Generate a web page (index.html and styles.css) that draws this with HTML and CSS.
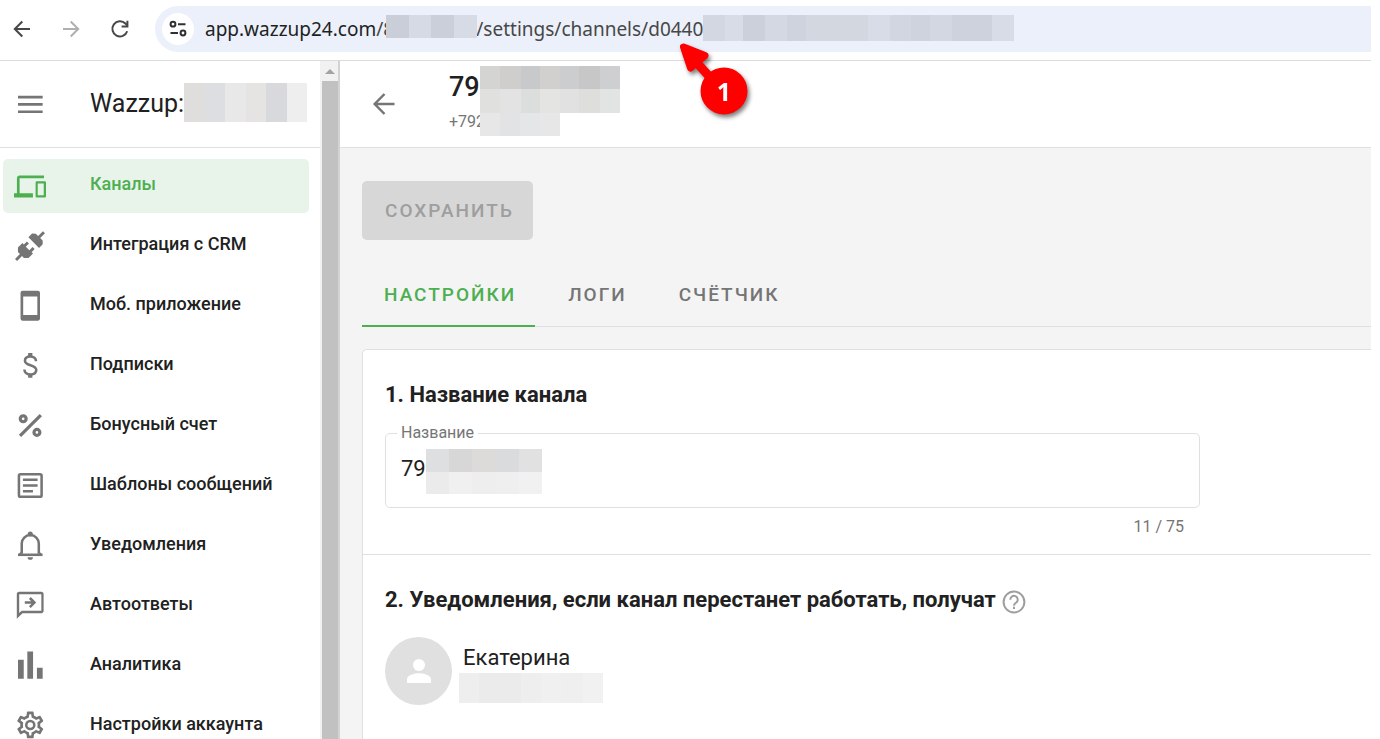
FILE: index.html
```html
<!DOCTYPE html>
<html lang="ru">
<head>
  <meta charset="UTF-8">
  <meta name="viewport" content="width=device-width, initial-scale=1.0">
  <title>Wazzup: Каналы</title>
  <link rel="stylesheet" href="styles.css">
</head>
<body>
  <div class="window">
    <div class="toolbar">
      <button class="tool" type="button" aria-label="Назад">
        <svg width="24" height="24" viewBox="0 0 24 24" fill="none" stroke="#474747" stroke-width="2"><path d="M20 12H5M12.3 4.5 4.8 12l7.5 7.5"/></svg>
      </button>
      <button class="tool" type="button" aria-label="Вперёд">
        <svg width="24" height="24" viewBox="0 0 24 24" fill="none" stroke="#b0b0b0" stroke-width="2"><path d="M4 12h15M11.7 4.5l7.5 7.5-7.5 7.5"/></svg>
      </button>
      <button class="tool" type="button" aria-label="Обновить">
        <svg width="24" height="24" viewBox="0 0 24 24" fill="none" stroke="#474747" stroke-width="2"><path d="M19.2 14.2A7.6 7.6 0 1 1 17.4 6.5L19.2 8.4"/><path d="M19.4 3.8v5.8h-5.8"/></svg>
      </button>
      <div class="address">
        <button class="site-info" type="button" aria-label="Сведения о сайте">
          <svg width="20" height="20" viewBox="0 0 20 20" fill="none" stroke="#303030" stroke-width="2"><circle cx="5" cy="5.2" r="2.4"/><path d="M10 5.2h7.5M2.5 14h7.5"/><circle cx="15" cy="14" r="2.4"/></svg>
        </button>
        <div class="url"><span class="host">app.wazzup24.com</span>/<span class="hidden-id">8<i class="mosaic mosaic-id"></i></span>/settings/channels/d0440<i class="mosaic mosaic-guid"></i></div>
      </div>
    </div>

    <div class="app">
      <aside class="sidebar">
        <div class="panel">
          <div class="brand">
            <button class="menu" type="button" aria-label="Меню">
              <svg width="32" height="32" viewBox="0 0 24 24" fill="#757575"><path d="M3 5.8h18.500v2H3zM3 11.300h18.500v2H3zM3 16.800h18.500v2H3z"/></svg>
            </button>
            <span class="brand-name">Wazzup:</span>
            <i class="mosaic mosaic-brand"></i>
          </div>
          <nav class="nav">
            <a class="nav-item active" href="#">
              <svg viewBox="0 0 24 24"><path d="M4.200 6.200h18.300v-2H4.200c-1.100 0-2 .9-2 2v11.300H0v3.200h14.200v-3.200h-10zM23 8.500h-5.800c-.6 0-1 .4-1 1v10.200c0 .6.4 1 1 1H23c.6 0 1-.4 1-1V9.500c0-.6-.4-1-1-1zm-.7 10.500h-4.500V10.200h4.500z"/></svg>
              <span>Каналы</span>
            </a>
            <a class="nav-item" href="#">
              <svg viewBox="0 0 24 24"><g transform="rotate(45 12 12)"><path d="M11-2.700h2.200v5.100h2.600l2 1.900V8.200H6.500V4.300l2-1.900H11zM7.900 11.200h2.200v3.400h3.800v-3.400h2.200v3.200h1.500v4.800l-2.400 2.400h-2.100v5.200h-2.200v-5.200H8.800l-2.400-2.400v-4.800h1.500z"/></g></svg>
              <span>Интеграция с CRM</span>
            </a>
            <a class="nav-item" href="#">
              <svg viewBox="0 0 24 24"><path d="M6.500.600h11.400c.9 0 1.600.7 1.600 1.600v19.200c0 .9-.7 1.600-1.600 1.600H6.500c-.9 0-1.600-.7-1.600-1.600V2.200c0-.9.7-1.600 1.600-1.600zm.4 4.200v14h10.600v-14z"/></svg>
              <span>Моб. приложение</span>
            </a>
            <a class="nav-item" href="#">
              <svg viewBox="0 0 24 24"><path d="M10.600 2.200h3.200v2.600h-3.200zM10.600 18.200h3.200v2.600h-3.200z"/><path class="line" d="M16.500 8.400c0-2.200-1.700-3.600-4.200-3.600-2.600 0-4.100 1.300-4.100 3.200 0 4.300 8.500 2.500 8.500 7 0 2-1.700 3.300-4.300 3.300-2.800 0-4.500-1.400-4.600-3.700"/></svg>
              <span>Подписки</span>
            </a>
            <a class="nav-item" href="#">
              <svg viewBox="0 0 24 24"><g class="line thick"><circle cx="6.900" cy="6.600" r="2.200"/><circle cx="17.200" cy="16.800" r="2.200"/><path d="M4.500 19.400 20.100 3.900"/></g></svg>
              <span>Бонусный счет</span>
            </a>
            <a class="nav-item" href="#">
              <svg viewBox="0 0 24 24"><g class="line"><rect x="3.700" y="3.200" width="17" height="16.900" rx="1.200"/><path d="M6.700 7.300h11M6.700 11.700h11M6.700 15.900h7.500"/></g></svg>
              <span>Шаблоны сообщений</span>
            </a>
            <a class="nav-item" href="#">
              <svg viewBox="0 0 24 24"><g class="line"><path d="M5.800 17.800V10.200a6.400 6.400 0 0 1 12.800 0v7.600"/><path d="M3 18.600h18.400"/></g><circle cx="12.200" cy="3" r="1.900"/><path d="M5.200 16.300 3 18.600h18.400l-2.200-2.300V18h-14zM10.200 20.400h4a2 2 0 0 1-4 0z"/></svg>
              <span>Уведомления</span>
            </a>
            <a class="nav-item" href="#">
              <svg viewBox="0 0 24 24"><path d="M20.500 1.300H3.800c-.9 0-1.700.7-1.700 1.700v18.600l4.300-4.200h14.100c1 0 1.700-.8 1.700-1.700V3c0-1-.7-1.700-1.700-1.700zm0 14.300H5.700l-1.800 1.700V3.100h16.600z"/><path class="line" d="M8.100 9.400h7M11.900 6l3.400 3.400-3.400 3.400"/></svg>
              <span>Автоответы</span>
            </a>
            <a class="nav-item" href="#">
              <svg viewBox="0 0 24 24"><path d="M3 7.300h4.300v14.200H3zM10 1.100h4.300v20.400H10zM17.200 13.300h4.300v8.200h-4.300z"/></svg>
              <span>Аналитика</span>
            </a>
            <a class="nav-item" href="#">
              <svg viewBox="0 0 24 24"><g transform="translate(.2 -.8)"><path d="M19.430 12.980c.04-.32.07-.64.07-.98s-.03-.66-.07-.98l2.110-1.650c.19-.15.24-.42.12-.64l-2-3.460c-.09-.16-.26-.25-.44-.25-.06 0-.12.01-.17.03l-2.490 1c-.52-.4-1.080-.73-1.690-.98l-.38-2.650C14.460 2.180 14.250 2 14 2h-4c-.25 0-.46.18-.49.42l-.38 2.650c-.61.25-1.170.59-1.690.98l-2.490-1c-.06-.02-.12-.03-.18-.03-.17 0-.34.09-.43.25l-2 3.460c-.13.22-.07.49.12.64l2.110 1.650c-.04.32-.07.65-.07.98s.03.66.07.98l-2.110 1.650c-.19.15-.24.42-.12.64l2 3.460c.09.16.26.25.44.25.06 0 .12-.01.17-.03l2.490-1c.52.4 1.080.73 1.690.98l.38 2.650c.03.24.24.42.49.42h4c.25 0 .46-.18.49-.42l.38-2.650c.61-.25 1.170-.59 1.690-.98l2.490 1c.06.02.12.03.18.03.17 0 .34-.09.43-.25l2-3.460c.12-.22.07-.49-.12-.64l-2.110-1.650zm-1.980-1.710c.04.31.05.52.05.73 0 .21-.02.43-.05.73l-.14 1.130.89.7 1.080.84-.7 1.210-1.270-.51-1.040-.42-.9.68c-.43.32-.84.56-1.250.73l-1.060.43-.16 1.130-.2 1.350h-1.400l-.19-1.350-.16-1.130-1.060-.43c-.43-.18-.83-.41-1.230-.71l-.91-.7-1.060.43-1.270.51-.7-1.210 1.080-.84.89-.7-.14-1.130c-.03-.31-.05-.54-.05-.74s.02-.43.05-.73l.14-1.130-.89-.7-1.080-.84.7-1.210 1.270.51 1.040.42.9-.68c.43-.32.84-.56 1.250-.73l1.060-.43.16-1.130.2-1.350h1.390l.19 1.350.16 1.130 1.060.43c.43.18.83.41 1.230.71l.91.7 1.060-.43 1.270-.51.7 1.210-1.070.85-.89.7.14 1.130z"/><circle class="line" cx="12" cy="12" r="3"/></g></svg>
              <span>Настройки аккаунта</span>
            </a>
          </nav>
        </div>
        <div class="scrollbar">
          <div class="scroll-up"></div>
          <div class="scroll-thumb"></div>
        </div>
      </aside>

      <main class="main">
        <header class="channel">
          <button class="back" type="button" aria-label="К списку каналов">
            <svg width="28" height="28" viewBox="0 0 28 28" fill="none" stroke="#757575" stroke-width="2.500"><path d="M24.500 14H5M14.500 4 4.700 14l9.800 10"/></svg>
          </button>
          <div class="channel-text">
            <h1>79</h1>
            <p>+792</p>
            <i class="mosaic mosaic-title"></i>
            <i class="mosaic mosaic-phone"></i>
          </div>
        </header>

        <div class="content">
          <button class="save" type="button" disabled>Сохранить</button>

          <div class="tabs" role="tablist">
            <button class="tab selected" type="button" role="tab" aria-selected="true">Настройки</button>
            <button class="tab" type="button" role="tab">Логи</button>
            <button class="tab" type="button" role="tab">Счётчик</button>
          </div>

          <div class="card">
            <section class="section name-section">
              <h2>1. Название канала</h2>
              <fieldset class="field">
                <legend><label for="channel-name">Название</label></legend>
                <input id="channel-name" type="text" value="79">
                <i class="mosaic mosaic-name"></i>
              </fieldset>
              <div class="counter">11 / 75</div>
            </section>
            <section class="section people-section">
              <div class="heading">
                <h2>2. Уведомления, если канал перестанет работать, получат</h2>
                <button class="help" type="button" aria-label="Справка">
                  <svg width="24" height="24" viewBox="0 0 24 24" fill="none" stroke="#9e9e9e" stroke-width="2"><circle cx="12" cy="12" r="10.400"/><path d="M8.300 9.700a3.700 3.700 0 1 1 6.300 2.500c-1.400 1.200-2.600 1.700-2.600 3.600"/><path d="M12 16.800v2.200"/></svg>
                </button>
              </div>
              <div class="person">
                <div class="avatar">
                  <svg width="36" height="36" viewBox="0 0 24 24" fill="#fff"><circle cx="12" cy="8" r="4"/><path d="M12 13.500c-2.700 0-8 1.300-8 4V20h16v-2.500c0-2.700-5.300-4-8-4z"/></svg>
                </div>
                <div class="person-text">
                  <span class="person-name">Екатерина</span>
                  <i class="mosaic mosaic-contact"></i>
                </div>
              </div>
            </section>
          </div>
        </div>
      </main>
    </div>

    <svg class="pointer" width="90" height="90" viewBox="0 0 90 90">
      <path d="M48 51 27 28" stroke="#f00" stroke-width="9"/>
      <path d="M13.500 12 35 20.500 20.500 33z" fill="#f00" stroke="#f00" stroke-width="7" stroke-linejoin="round"/>
      <circle cx="54" cy="56" r="23.500" fill="#f00"/>
      <text class="pointer-number" x="54" y="66" text-anchor="middle">1</text>
    </svg>
  </div>
</body>
</html>
```
FILE: styles.css
```css
* {
  box-sizing: border-box;
}

body {
  margin: 0;
  font-family: Roboto, "Liberation Sans", sans-serif;
  background: #fff;
  color: #212121;
}

button {
  padding: 0;
  border: 0;
  background: none;
  font-family: inherit;
  cursor: pointer;
}

svg {
  display: block;
}

h1, h2, p {
  margin: 0;
}

.window {
  position: relative;
  display: flex;
  flex-direction: column;
  height: 100vh;
  padding-right: 9px;
  overflow: hidden;
}

/* browser toolbar */
.toolbar {
  flex: none;
  display: flex;
  align-items: center;
  gap: 25px;
  padding: 6px 0 8px 10px;
  border-bottom: 1px solid #dcdcdc;
}

.address {
  flex: 1;
  display: flex;
  align-items: center;
  gap: 11px;
  height: 46px;
  margin-left: -2px;
  padding-left: 7px;
  border-radius: 23px 0 0 23px;
  background: #ebf0fa;
}

.site-info {
  display: flex;
  align-items: center;
  justify-content: center;
  width: 32px;
  height: 32px;
  border-radius: 50%;
  background: #fff;
}

.url {
  display: flex;
  align-items: center;
  font: 19px/28px "Noto Sans", sans-serif;
  color: #474747;
}

.host {
  color: #1f1f1f;
}

.hidden-id {
  position: relative;
  width: 93px;
}

/* pixelated blocks over private data */
.mosaic {
  display: block;
}

.mosaic-id {
  position: absolute;
  top: 0;
  left: 3px;
  width: 91px;
  height: 23px;
  background: linear-gradient(90deg, #c9ced8 25%, #d5dae4 25% 50%, #cacfd9 50% 75%, #d6dbe5 75%);
}

.mosaic-guid {
  width: 311px;
  height: 26px;
  margin-bottom: 2px;
  background: linear-gradient(90deg, #d3d7e1 7%, #d8dce6 7% 13%, #cbd0da 13% 20%, #d3d8e2 20% 27%, #cfd3de 27% 33%, #d3d7e0 33% 53%, #d8dce6 53% 60%, #d2d6e0 60% 67%, #ced3dd 67% 73%, #d3d7e1 73% 80%, #ced2dc 80% 93%, #d8dce6 93%);
}

.mosaic-brand {
  width: 123px;
  height: 39px;
  background: linear-gradient(90deg, #dfdedd 17%, #dcdee1 17% 33%, #e8e8e8 33% 50%, #e5e4e2 50% 67%, #d7d9dc 67% 84%, #eee 84%);
}

.mosaic-title {
  position: absolute;
  top: 5px;
  left: 31px;
  width: 140px;
  height: 47px;
  background:
    linear-gradient(90deg, #d4d4d3 14%, #cfcecd 14% 29%, #c7c9cb 29% 43%, #d1d0cf 43% 57%, #cccdcf 57% 71%, #c7c7c8 71% 86%, #cecfd1 86%) top / 100% 23px no-repeat,
    linear-gradient(90deg, #e0e0df 14%, #e3e3e3 14% 29%, #dcdedd 29% 43%, #e4e4e2 43% 57%, #e1e1e1 57% 71%, #dededd 71% 86%, #e2e4e4 86%) bottom / 100% 24px no-repeat;
}

.mosaic-phone {
  position: absolute;
  top: 52px;
  left: 31px;
  width: 80px;
  height: 23px;
  background: linear-gradient(90deg, #e7e7e7 25%, #e2e3e4 25% 50%, #e5e6e8 50% 75%, #e7e7e7 75%);
}

.mosaic-name {
  position: absolute;
  top: 7px;
  left: 40px;
  width: 116px;
  height: 45px;
  background:
    linear-gradient(90deg, #dedfe0 20%, #d7d7d8 20% 40%, #dcdbd9 40% 60%, #dadbdc 60% 80%, #e1e1e1 80%) top / 100% 23px no-repeat,
    linear-gradient(90deg, #ebebeb 20%, #f0f0f0 20% 40%, #eee 40% 60%, #efefef 60% 80%, #f1f1f1 80%) bottom / 100% 22px no-repeat;
}

.mosaic-contact {
  width: 144px;
  height: 30px;
  background: linear-gradient(90deg, #eee 14%, #ebebeb 14% 43%, #eee 43% 57%, #f0f0f0 57% 71%, #efefef 71% 86%, #f1f1f1 86%);
}

.app {
  flex: 1;
  display: flex;
  min-height: 0;
}

/* sidebar */
.sidebar {
  flex: none;
  display: flex;
  width: 340px;
}

.panel {
  flex: 1;
  overflow: hidden;
}

.brand {
  display: flex;
  align-items: center;
  height: 87px;
  padding-left: 14px;
  border-bottom: 1px solid #e0e0e0;
}

.brand-name {
  width: 94px;
  margin-left: 44px;
  font-size: 25px;
  line-height: 32px;
}

.brand .mosaic-brand {
  margin-top: -4px;
}

.nav {
  display: flex;
  flex-direction: column;
  gap: 6px;
  padding: 11px 11px 0 3px;
}

.nav-item {
  flex: none;
  display: flex;
  align-items: center;
  gap: 44px;
  height: 54px;
  padding-left: 11px;
  border-radius: 5px;
  color: #212121;
  font-size: 18px;
  font-weight: 500;
  line-height: 24px;
  text-decoration: none;
}

.nav-item span {
  padding-bottom: 4px;
}

.nav-item svg {
  width: 32px;
  height: 32px;
  fill: #757575;
  overflow: visible;
}

.nav-item .line {
  fill: none;
  stroke: #757575;
  stroke-width: 1.9;
}

.nav-item .thick {
  stroke-width: 2.4;
}

.nav-item.active {
  background: #e8f3ea;
  color: #4caf50;
}

.nav-item.active svg {
  fill: #4caf50;
}

.scrollbar {
  display: flex;
  flex-direction: column;
  width: 20px;
  padding-left: 2px;
  border-right: 2px solid #d3d3d3;
  background: #f1f1f1;
}

.scroll-up {
  height: 20px;
  display: flex;
  align-items: center;
  justify-content: center;
}

.scroll-up::before {
  content: "";
  border: 5px solid transparent;
  border-top: 0;
  border-bottom-color: #a3a3a3;
}

.scroll-thumb {
  flex: 1;
  background: #c1c1c1;
}

/* channel page */
.main {
  flex: 1;
  min-width: 0;
  background: #f4f4f4;
}

.channel {
  display: flex;
  align-items: center;
  gap: 51px;
  height: 87px;
  padding-left: 30px;
  border-bottom: 1px solid #e0e0e0;
  background: #fff;
}

.channel-text {
  position: relative;
  align-self: stretch;
  padding-top: 10px;
}

.channel h1 {
  font-size: 27px;
  font-weight: 500;
  line-height: 32px;
}

.channel p {
  margin-top: 9px;
  color: #757575;
  font-size: 16px;
  line-height: 20px;
}

.content {
  padding: 33px 0 0 22px;
}

.save {
  height: 59px;
  padding: 0 19px 0 23px;
  border-radius: 5px;
  background: #d7d7d7;
  color: #9e9e9e;
  font-size: 19px;
  font-weight: 500;
  letter-spacing: 2px;
  text-transform: uppercase;
}

.tabs {
  display: flex;
  margin-top: 22px;
  box-shadow: inset 0 -1px #e0e0e0;
}

.tab {
  height: 65px;
  padding: 2px 19px 0 22px;
  border-bottom: 2px solid transparent;
  color: #757575;
  font-size: 19px;
  font-weight: 500;
  letter-spacing: 2px;
  text-transform: uppercase;
}

.tab + .tab {
  padding-left: 33px;
}

.tab.selected {
  border-color: #4caf50;
  color: #4caf50;
}

.card {
  margin-top: 22px;
  border: 1px solid #e0e0e0;
  border-right: 0;
  border-radius: 5px 0 0 0;
  background: #fff;
}

.section {
  padding: 30px 22px;
}

.name-section {
  padding-bottom: 16px;
  border-bottom: 1px solid #e0e0e0;
}

.people-section {
  padding-bottom: 60px;
}

h2 {
  font-size: 22px;
  font-weight: 700;
  line-height: 30px;
}

.field {
  position: relative;
  width: 100%;
  max-width: 815px;
  height: 84px;
  margin: 14px 0 0;
  padding: 0 11px;
  border: 1px solid #e0e0e0;
  border-radius: 5px;
}

.field legend {
  padding: 0 4px;
  color: #757575;
  font-size: 16px;
  line-height: 18px;
}

.field input {
  width: 100%;
  height: 40px;
  padding: 0 4px;
  margin-top: 6px;
  border: 0;
  outline: 0;
  background: none;
  color: #212121;
  font: 22px Roboto, sans-serif;
}

.counter {
  max-width: 815px;
  margin-top: 8px;
  padding-right: 16px;
  color: #757575;
  font-size: 16px;
  line-height: 22px;
  text-align: right;
}

.heading {
  display: flex;
  align-items: center;
  gap: 6px;
}

.help {
  margin-top: 3px;
}

.person {
  display: flex;
  gap: 7px;
  margin-top: 22px;
}

.avatar {
  display: flex;
  align-items: center;
  justify-content: center;
  width: 67px;
  height: 68px;
  border-radius: 50%;
  background: #e0e0e0;
}

.person-text {
  padding-top: 6px;
}

.person-name {
  display: block;
  padding: 0 4px 1px;
  font-size: 22px;
  line-height: 29px;
}

/* numbered arrow */
.pointer {
  position: absolute;
  top: 35px;
  left: 670px;
  filter: drop-shadow(2px 3px 2px rgba(0, 0, 0, 0.5));
}

.pointer-number {
  fill: #fff;
  font: 700 25px "Open Sans", sans-serif;
}
```
